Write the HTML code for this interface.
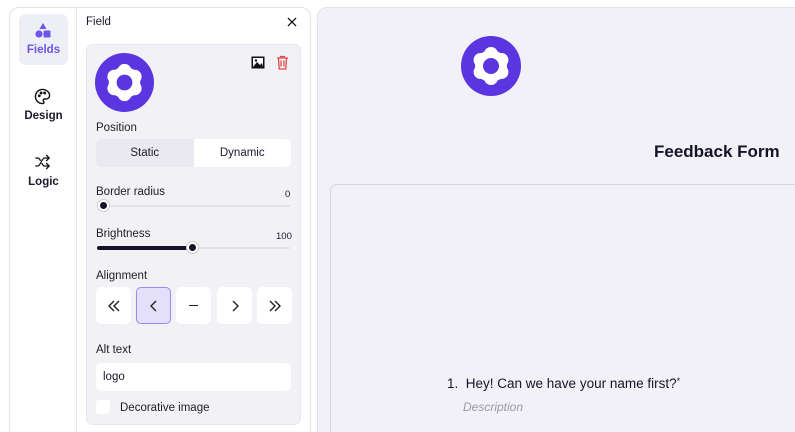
<!DOCTYPE html>
<html style="width:795px;height:432px;overflow:hidden"><head><style>
*{box-sizing:border-box;margin:0;padding:0}
body{width:795px;height:432px;overflow:hidden;background:#fff;font-family:"Liberation Sans",sans-serif;color:#1a1a2a;position:relative}
.abs{position:absolute}
.lp{left:9px;top:7px;width:302px;height:440px;border:1px solid #e3e3ea;border-radius:10px;background:#fff}
.side{left:76px;top:8px;width:1px;height:430px;background:#e6e6ec}
.nav{left:19px;width:49px;text-align:center;font-size:11.5px;font-weight:bold}
.card{left:86px;top:44px;width:215px;height:381px;background:#f1f1f6;border:1px solid #e6e6ee;border-radius:7px}
.lbl{font-size:11.5px;color:#222}
.seg{left:96px;top:139px;width:195px;height:28px;border-radius:5px;background:#fff;display:flex;font-size:11.5px}
.seg div{flex:1;display:flex;align-items:center;justify-content:center}
.track{height:2px;background:#e1e1e8;border-radius:1px}
.knob{width:11px;height:11px;border-radius:50%;background:#13132a;border:2px solid #fff;box-shadow:0 0 0 1px #ccc}
.al{top:287px;width:35px;height:37px;background:#fff;border-radius:5px;display:flex;align-items:center;justify-content:center}
.rp{left:317px;top:7px;width:490px;height:440px;background:#f1f1f7;border:1px solid #e3e3ea;border-radius:10px}
</style></head><body>
<div class="abs lp"></div>
<div class="abs side"></div>
<div class="abs" style="left:19px;top:14px;width:49px;height:51px;background:#eeeef6;border-radius:7px"></div>
<svg class="abs" style="left:34px;top:22px" width="18" height="17" viewBox="0 0 18 17"><path d="M9 1 L12.5 7 H5.5Z" fill="#6c55e8"/><circle cx="5" cy="12" r="3.6" fill="#6c55e8"/><rect x="9.5" y="8.5" width="7" height="7" rx="1" fill="#6c55e8"/></svg>
<div class="abs nav" style="top:44px;color:#6c55e8">Fields</div>
<svg class="abs" style="left:34px;top:88px" width="17" height="17" viewBox="0 0 24 24" fill="none" stroke="#111" stroke-width="2"><path d="M12 2a10 10 0 0 0 0 20c1.5 0 2-1 2-2s-1-1.5-1-2.5 1-2 2-2h2a5 5 0 0 0 5-5C22 6 17.5 2 12 2z"/><circle cx="7.5" cy="11" r="1" fill="#111"/><circle cx="10" cy="7" r="1" fill="#111"/><circle cx="15" cy="7" r="1" fill="#111"/></svg>
<div class="abs nav" style="top:110px">Design</div>
<svg class="abs" style="left:34px;top:154px" width="17" height="16" viewBox="0 0 24 24" fill="none" stroke="#111" stroke-width="2" stroke-linecap="round" stroke-linejoin="round"><path d="M2 18h3c4 0 6-12 10-12h7M18 2l4 4-4 4M2 6h3c1.5 0 2.7 1.5 3.7 3.5M22 18h-7c-1.5 0-2.7-1.5-3.7-3.5M18 14l4 4-4 4"/></svg>
<div class="abs nav" style="top:176px">Logic</div>

<div class="abs" style="left:86px;top:16px;font-size:11.5px">Field</div>
<svg class="abs" style="left:287px;top:17px" width="10" height="10" viewBox="0 0 11 11" stroke="#111" stroke-width="1.4"><path d="M1 1L10 10M10 1L1 10"/></svg>
<div class="abs card"></div>
<svg class="abs" style="left:95px;top:53px" width="59" height="59" viewBox="0 0 60 60"><circle cx="30" cy="30" r="30" fill="#5b35e0"/><g fill="#fff"><circle cx="30" cy="30" r="16"/><circle cx="30" cy="18" r="7"/><circle cx="30" cy="42" r="7"/><circle cx="19.6" cy="24" r="7"/><circle cx="40.4" cy="24" r="7"/><circle cx="19.6" cy="36" r="7"/><circle cx="40.4" cy="36" r="7"/></g><circle cx="30" cy="30" r="8" fill="#5b35e0"/></svg>
<svg class="abs" style="left:251px;top:56px" width="14" height="13" viewBox="0 0 14 13"><rect x="0.5" y="0.5" width="13" height="12" fill="#111"/><rect x="2" y="2" width="10" height="9" fill="#fff"/><path d="M2 11L6 6l3 3 2-2 1 4z" fill="#111"/><circle cx="5" cy="4.5" r="1.2" fill="#111"/></svg>
<svg class="abs" style="left:276px;top:55px" width="13" height="15" viewBox="0 0 13 15" fill="none" stroke="#e24a4a" stroke-width="1.3"><path d="M1 3h11M4.5 3V1.5h4V3M2.5 3l.7 11h6.6l.7-11M5 5.5v6M8 5.5v6"/></svg>

<div class="abs lbl" style="left:96px;top:122px">Position</div>
<div class="abs seg"><div style="background:#e9e9ef;border-radius:5px 0 0 5px">Static</div><div>Dynamic</div></div>

<div class="abs lbl" style="left:96px;top:186px">Border radius</div>
<div class="abs" style="left:285px;top:189px;font-size:9.5px">0</div>
<div class="abs track" style="left:100px;top:205px;width:190px"></div>
<div class="abs knob" style="left:98px;top:200px"></div>

<div class="abs lbl" style="left:96px;top:228px">Brightness</div>
<div class="abs" style="left:276px;top:231px;font-size:9.5px">100</div>
<div class="abs track" style="left:100px;top:247px;width:190px"></div>
<div class="abs" style="left:97px;top:246px;width:96px;height:4px;background:#13132a;border-radius:2px"></div>
<div class="abs knob" style="left:187px;top:242px"></div>

<div class="abs lbl" style="left:96px;top:270px">Alignment</div>
<div class="abs al" style="left:96px"><svg width="14" height="12" viewBox="0 0 14 12" fill="none" stroke="#222" stroke-width="1.4"><path d="M7 1L2 6l5 5M12 1L7 6l5 5"/></svg></div>
<div class="abs al" style="left:136px;background:#e4e0fb;border:1px solid #9a8be8"><svg width="8" height="12" viewBox="0 0 8 12" fill="none" stroke="#222" stroke-width="1.4"><path d="M6 1L1 6l5 5"/></svg></div>
<div class="abs al" style="left:176px"><div style="width:9px;height:1.5px;background:#222"></div></div>
<div class="abs al" style="left:217px"><svg width="8" height="12" viewBox="0 0 8 12" fill="none" stroke="#222" stroke-width="1.4"><path d="M2 1l5 5-5 5"/></svg></div>
<div class="abs al" style="left:257px"><svg width="14" height="12" viewBox="0 0 14 12" fill="none" stroke="#222" stroke-width="1.4"><path d="M2 1l5 5-5 5M7 1l5 5-5 5"/></svg></div>

<div class="abs lbl" style="left:96px;top:344px">Alt text</div>
<div class="abs" style="left:96px;top:363px;width:195px;height:28px;background:#fff;border-radius:5px;font-size:11.5px;padding:8px 7px">logo</div>
<div class="abs" style="left:96px;top:400px;width:14px;height:14px;background:#fff;border-radius:3px"></div>
<div class="abs lbl" style="left:120px;top:402px">Decorative image</div>

<div class="abs rp"></div>
<svg class="abs" style="left:461px;top:36px" width="60" height="60" viewBox="0 0 60 60"><circle cx="30" cy="30" r="30" fill="#5b35e0"/><g fill="#fff"><circle cx="30" cy="30" r="16"/><circle cx="30" cy="18" r="7"/><circle cx="30" cy="42" r="7"/><circle cx="19.6" cy="24" r="7"/><circle cx="40.4" cy="24" r="7"/><circle cx="19.6" cy="36" r="7"/><circle cx="40.4" cy="36" r="7"/></g><circle cx="30" cy="30" r="8" fill="#5b35e0"/></svg>
<div class="abs" style="left:654px;top:142px;font-size:17px;font-weight:bold;color:#15152a">Feedback Form</div>
<div class="abs" style="left:330px;top:184px;width:480px;height:260px;border:1.5px solid #d6d6dc;border-radius:7px"></div>
<div class="abs" style="left:447px;top:376px;font-size:13.5px;color:#15152a">1.&nbsp; Hey! Can we have your name first?<span style="font-size:9px;vertical-align:top">*</span></div>
<div class="abs" style="left:463px;top:400px;font-size:12px;font-style:italic;color:#9a9aa6">Description</div>
</body></html>
